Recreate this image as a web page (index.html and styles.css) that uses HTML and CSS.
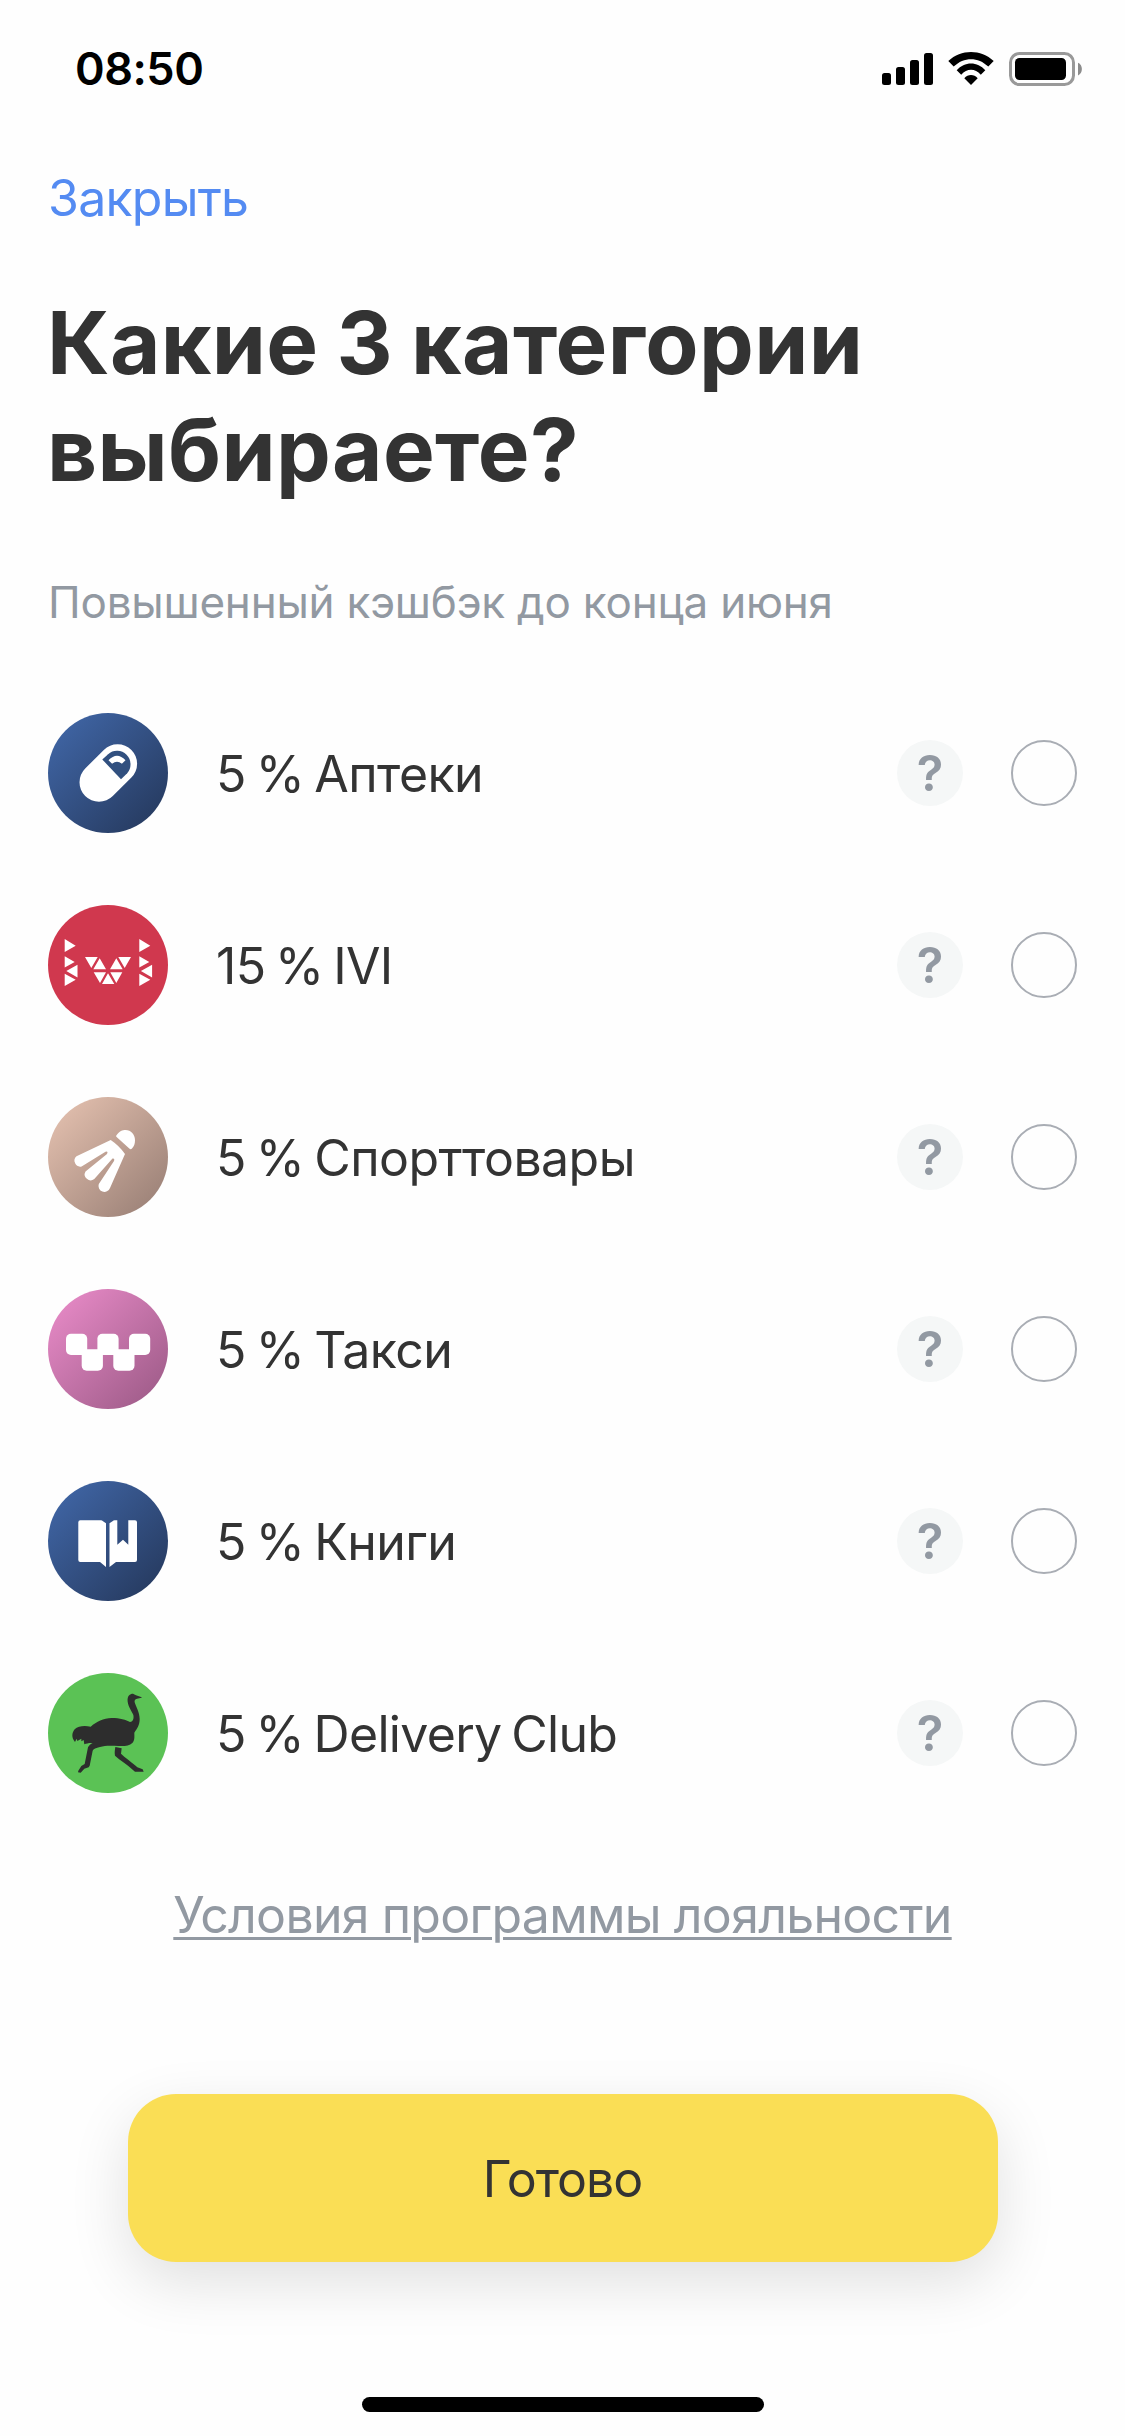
FILE: index.html
```html
<!DOCTYPE html>
<html lang="ru">
<head>
<meta charset="utf-8">
<title>Категории кэшбэка</title>
<link rel="stylesheet" href="styles.css">
</head>
<body>
<div class="status-bar">
  <div class="time">08:50</div>
  <div class="status-icons">
    <svg width="51" height="34" viewBox="0 0 51 34"><rect x="0" y="21" width="9" height="12" rx="2.5"/><rect x="14" y="15" width="9" height="18" rx="2.5"/><rect x="28" y="8" width="9" height="25" rx="2.5"/><rect x="42" y="1" width="9" height="32" rx="2.5"/></svg>
    <svg width="46" height="34" viewBox="0 0 46 34"><path d="M.3 9C13-3 33-3 45.7 9L40.3 14.5C30 4.7 16 4.7 5.7 14.5ZM8.7 18.2C16.5 9.2 29.5 9.2 37.3 18.2L32.8 22.8C27 16.2 19 16.2 13.2 22.8ZM16.3 26.3C20 22 26 22 29.7 26.3L23 33Z"/></svg>
    <svg width="73" height="34" viewBox="0 0 73 34"><rect x="1.5" y="1.5" width="63" height="31" rx="9" fill="none" stroke="#999" stroke-width="3"/><rect x="6" y="6" width="51" height="22" rx="4.5"/><path d="M69 10.700C74.200 13 74.200 21 69 23.500Z" fill="#8c8c8c"/></svg>
  </div>
</div>

<nav class="nav"><a class="close">Закрыть</a></nav>
<h1 class="title">Какие 3 категории<br>выбираете?</h1>
<p class="subtitle">Повышенный кэшбэк до конца июня</p>

<ul class="list">
  <li class="row">
    <span class="icon icon-blue"><svg viewBox="0 0 120 120"><path d="M51 69.3L69.600 50.700" fill="none" stroke="#fff" stroke-width="39" stroke-linecap="round"/><path d="M54.300 46.500L60.100 41.200A13.500 13.500 0 0 1 79.200 60.200L73 66.200Z" fill="#31507f"/><path d="M60.500 47.300Q69 38.300 77.500 47.300L73.900 50.700Q69 47 64.100 50.700Z" fill="#fff"/></svg></span>
    <span class="name">5 % Аптеки</span><span class="help">?</span><span class="radio"></span>
  </li>
  <li class="row">
    <span class="icon icon-red"><svg viewBox="0 0 120 120" fill="#fff"><path id="ivi-side" d="M16.700 34V47L27.700 40.700ZM16.700 51.300V62.500L26.700 57ZM29.500 59.700V72.500L18.300 66ZM16.700 68.700V81L27.700 74.700Z"/><use href="#ivi-side" x="74.600"/><path d="M37 52H49.700L43.300 63ZM51.700 53.300L45.300 64.300H58ZM68.300 53.300L62 64.300H74.700ZM70.300 52H83L76.700 63ZM45.700 67.300H58L52 78ZM60 68.300L54 79H66.300ZM62.300 67.300H74.300L68.300 78Z"/></svg></span>
    <span class="name name-latin">15 % IVI</span><span class="help">?</span><span class="radio"></span>
  </li>
  <li class="row">
    <span class="icon icon-sand"><svg viewBox="0 0 120 120" fill="#fff"><path d="M68.300 38.500C71.500 34 74.500 33 77.500 33C83 33 87 37.500 87 43.200C87 46.500 86 49.500 84 51.500Q82.700 52.800 81.300 51.500L68.600 40Q67.700 39.200 68.300 38.500Z"/><path d="M62.700 43Q71 48.500 77 57L62 91A5.900 5.900 0 0 1 50.800 87L66 64Q67 61 64.500 61.500L46.300 82A5.900 5.900 0 0 1 37.500 74.500L59 57Q60.500 54 57.500 54.700L33.600 69.500A5.900 5.900 0 0 1 28.500 59.300Z"/></svg></span>
    <span class="name">5 % Спорттовары</span><span class="help">?</span><span class="radio"></span>
  </li>
  <li class="row">
    <span class="icon icon-pink"><svg viewBox="0 0 120 120" fill="#fff"><rect x="18" y="44.700" width="21.200" height="21.200" rx="5"/><rect x="49.400" y="44.700" width="21.200" height="21.200" rx="5"/><rect x="81" y="44.700" width="21.200" height="21.200" rx="5"/><rect x="33.700" y="60.600" width="21.200" height="21.200" rx="5"/><rect x="65.300" y="60.600" width="21.200" height="21.200" rx="5"/><path d="M36 60.600H84V65.900H36Z"/></svg></span>
    <span class="name">5 % Такси</span><span class="help">?</span><span class="radio"></span>
  </li>
  <li class="row">
    <span class="icon icon-blue"><svg viewBox="0 0 120 120" fill="#fff"><path d="M32.300 39.300H53Q54 39.300 55 40.300L58 42.300V86L52 81H32.300Q30.300 81 30.300 79V41.300Q30.300 39.300 32.300 39.300ZM61.500 42.300L64.500 40.300Q65.500 39.300 66.500 39.300H69.300V63.700L75 58.700L80.300 63.700V39.300H87Q89 39.300 89 41.300V79Q89 81 87 81H68L61.500 86Z"/></svg></span>
    <span class="name">5 % Книги</span><span class="help">?</span><span class="radio"></span>
  </li>
  <li class="row">
    <span class="icon icon-green"><svg viewBox="24 24 360 360" fill="#2d2d2d"><path d="M305 98L291 101C285 103 283 106 284 112C287 124 299 142 299 162C299 182 290 192 283 203C283 215 285 225 277 234C268 243 252 244 235 243C215 242 195 241 180 246C168 249 160 252 158 257L149 302L146 307L133 311L122 323L114 322L115 317L124 303L134 297L144 247C147 241 152 237 158 234C148 233 140 235 133 238L131 225L124 229L124 221L112 228L110 221L105 231C94 218 95 204 104 193C115 182 135 181 152 185C170 170 190 159 215 159C240 159 258 165 270 171C280 170 282 160 280 150C277 140 265 127 263 110C261 92 270 86 279 86L288 91L305 97Z"/><path d="M226 246L245 250L243 266C255 278 272 289 285 301L292 307L308 313L311 320L285 320L278 314C262 298 240 286 225 272C223 262 225 254 226 246Z"/></svg></span>
    <span class="name name-latin">5 % Delivery Club</span><span class="help">?</span><span class="radio"></span>
  </li>
</ul>

<a class="terms">Условия программы лояльности</a>
<button class="done">Готово</button>
<div class="home-indicator"></div>
</body>
</html>
```
FILE: styles.css
```css
* { box-sizing: border-box; margin: 0; padding: 0; }

body {
  width: 1125px;
  height: 2436px;
  display: flex;
  flex-direction: column;
  background: #fefefe;
  color: #333;
  font-family: Inter, "Liberation Sans", sans-serif;
  font-size: 50px;
  line-height: 60px;
  overflow: hidden;
}

.status-bar {
  height: 138px;
  padding: 0 43px 0 75px;
  display: flex;
  align-items: center;
  justify-content: space-between;
  color: #000;
}
.time { font-size: 45px; font-weight: 600; letter-spacing: -0.5px; }
.status-icons { display: flex; gap: 15px; }
.status-icons svg { display: block; }

.nav { margin: 30px 0 0 48px; height: 60px; }
.close { color: #548bf2; letter-spacing: -0.75px; }

.title {
  margin: 61px 48px 0;
  font-size: 87px;
  font-weight: 700;
  line-height: 107px;
  letter-spacing: 0.35px;
  word-spacing: -3px;
}
.title { margin-left: 47px; }

.subtitle {
  margin: 69px 48px 0;
  font-size: 44px;
  letter-spacing: -0.22px;
  color: #9299a2;
}

.list {
  margin: 81px 48px 0;
  display: flex;
  flex-direction: column;
  gap: 72px;
  list-style: none;
}
.row { display: flex; align-items: center; height: 120px; }

.icon { width: 120px; height: 120px; border-radius: 50%; flex: none; }
.icon svg { display: block; width: 120px; height: 120px; }
.icon-blue { background: linear-gradient(135deg, #3f64a3 10%, #263a5f 92%); }
.icon-red { background: #d0384e; }
.icon-sand { background: linear-gradient(135deg, #e0bdac 10%, #9b8177 92%); }
.icon-pink { background: linear-gradient(135deg, #e488c4 10%, #9f5c89 92%); }
.icon-green { background: #5bc255; }

.name {
  flex: 1;
  padding-top: 2px;
  margin-left: 48px;
  letter-spacing: -0.55px;
  word-spacing: -3.6px;
  white-space: nowrap;
}
.name-latin { letter-spacing: -0.7px; }

.help {
  width: 66px;
  height: 66px;
  border-radius: 50%;
  background: #f5f7f7;
  color: #9299a2;
  font-size: 49px;
  font-weight: 600;
  line-height: 67px;
  text-align: center;
}
.radio {
  width: 66px;
  height: 66px;
  margin-left: 48px;
  border: 2px solid #a9adb4;
  border-radius: 50%;
}

.terms {
  align-self: center;
  margin-top: 92px;
  color: #9299a2;
  letter-spacing: -0.7px;
  word-spacing: -0.5px;
  text-decoration: underline;
  text-decoration-thickness: 3px;
  text-underline-offset: 4px;
}

.done {
  align-self: center;
  width: 870px;
  height: 168px;
  margin-top: 149px;
  padding-top: 2px;
  border: 0;
  border-radius: 48px;
  background: #fade55;
  box-shadow: 0 20px 60px rgba(0, 0, 0, 0.12);
  color: #333;
  font: inherit;
  letter-spacing: -1px;
}

.home-indicator {
  align-self: center;
  width: 402px;
  height: 15px;
  margin-top: 135px;
  border-radius: 8px;
  background: #000;
}
```
